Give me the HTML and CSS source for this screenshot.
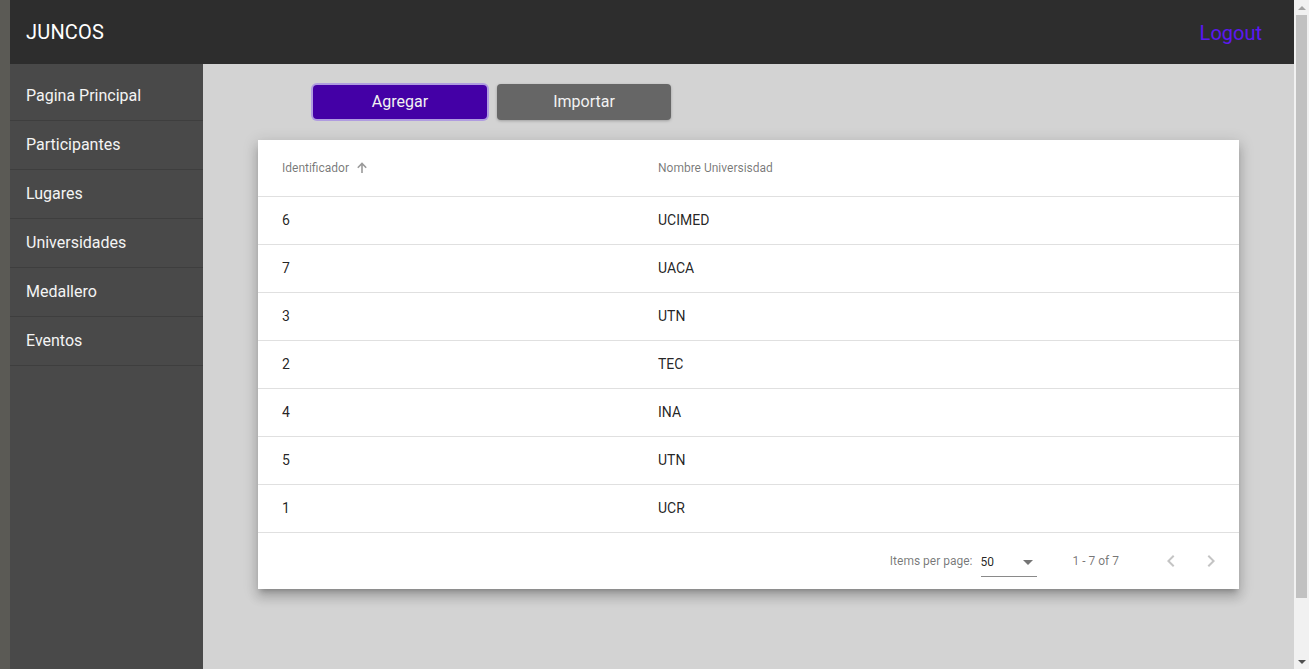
FILE: index.html
```html
<!DOCTYPE html>
<html lang="es">
<head>
<meta charset="utf-8">
<title>JUNCOS</title>
<link rel="stylesheet" href="styles.css">
</head>
<body>
<div class="window">
<div class="app">
  <header class="topbar">
    <span class="brand">JUNCOS</span>
    <a class="logout" href="#">Logout</a>
  </header>
  <div class="layout">
    <nav class="sidebar">
      <a class="nav-item" href="#">Pagina Principal</a>
      <a class="nav-item" href="#">Participantes</a>
      <a class="nav-item" href="#">Lugares</a>
      <a class="nav-item" href="#">Universidades</a>
      <a class="nav-item" href="#">Medallero</a>
      <a class="nav-item" href="#">Eventos</a>
    </nav>
    <main class="content">
      <div class="actions">
        <button class="btn btn-primary">Agregar</button>
        <button class="btn btn-secondary">Importar</button>
      </div>
      <section class="card">
        <div class="row head">
          <div class="cell">Identificador
            <svg class="sort" viewBox="0 0 12 12" width="12" height="12"><path d="M6 1.5 L6 11 M1.8 5.7 L6 1.5 L10.2 5.7" fill="none" stroke="currentColor" stroke-width="1.6"/></svg>
          </div>
          <div class="cell">Nombre Universisdad</div>
        </div>
        <div class="row"><div class="cell">6</div><div class="cell">UCIMED</div></div>
        <div class="row"><div class="cell">7</div><div class="cell">UACA</div></div>
        <div class="row"><div class="cell">3</div><div class="cell">UTN</div></div>
        <div class="row"><div class="cell">2</div><div class="cell">TEC</div></div>
        <div class="row"><div class="cell">4</div><div class="cell">INA</div></div>
        <div class="row"><div class="cell">5</div><div class="cell">UTN</div></div>
        <div class="row"><div class="cell">1</div><div class="cell">UCR</div></div>
        <div class="paginator">
          <span class="pg-label">Items per page:</span>
          <div class="pg-select">
            <span>50</span>
            <span class="caret"></span>
          </div>
          <span class="pg-range">1 - 7 of 7</span>
          <div class="pg-buttons">
            <button class="pg-btn" aria-label="Previous page">
              <svg viewBox="0 0 24 24" width="24" height="24"><path d="M15.41 7.41 14 6l-6 6 6 6 1.41-1.41L10.83 12z" fill="currentColor"/></svg>
            </button>
            <button class="pg-btn" aria-label="Next page">
              <svg viewBox="0 0 24 24" width="24" height="24"><path d="M10 6 8.59 7.41 13.17 12l-4.58 4.59L10 18l6-6z" fill="currentColor"/></svg>
            </button>
          </div>
        </div>
      </section>
    </main>
  </div>
</div>
<div class="scrollbar" aria-hidden="true">
  <span class="sb-arrow up"></span>
  <div class="sb-track"><div class="sb-thumb"></div></div>
  <span class="sb-arrow down"></span>
</div>
</div>
</body>
</html>
```

FILE: styles.css
```css
html, body {
  margin: 0;
  padding: 0;
  overflow: hidden;
}
body {
  background: #5b5a55;
  font-family: Roboto, "Noto Sans", "Liberation Sans", sans-serif;
}
.window {
  display: flex;
  height: 669px;
}
.app {
  flex: 1;
  margin-left: 10px;
  display: flex;
  flex-direction: column;
  background: #d3d3d3;
  overflow: hidden;
}
.topbar {
  height: 64px;
  flex: none;
  background: #2d2d2d;
  display: flex;
  align-items: center;
  justify-content: space-between;
  padding: 0 32px 0 16px;
}
.brand {
  color: #ffffff;
  font-size: 20px;
  letter-spacing: 0.2px;
}
.logout {
  color: #5c18f2;
  font-size: 20px;
  text-decoration: none;
  margin-top: 2px;
}
.layout {
  flex: 1;
  display: flex;
}
.sidebar {
  width: 193px;
  background: #494949;
  padding-top: 8px;
  display: flex;
  flex-direction: column;
}
.nav-item {
  box-sizing: border-box;
  height: 49px;
  padding-bottom: 2px;
  display: flex;
  align-items: center;
  padding-left: 16px;
  color: #f4f4f4;
  font-size: 16px;
  text-decoration: none;
  border-bottom: 1px solid #3e3e3e;
}
.content {
  flex: 1;
  padding-top: 20px;
}
.actions {
  display: flex;
  gap: 10px;
  padding-left: 110px;
  align-items: center;
  height: 36px;
}
.btn {
  font-family: inherit;
  font-size: 16px;
  color: #f2f2f2;
  border: none;
  border-radius: 4px;
  height: 36px;
  width: 174px;
  cursor: pointer;
  padding: 0 0 1px;
}
.btn-primary {
  background: #4400a6;
  height: 34px;
  box-shadow: 0 0 0 2px #b09ce0;
}
.btn-secondary {
  background: #666666;
  box-shadow: 0 1px 3px rgba(0,0,0,0.25);
}
.card {
  width: 981px;
  margin: 20px auto 0;
  background: #ffffff;
  box-shadow: 0 5px 5px -3px rgba(0,0,0,.2), 0 8px 10px 1px rgba(0,0,0,.14), 0 3px 14px 2px rgba(0,0,0,.12);
}
.row {
  display: grid;
  grid-template-columns: 376px 1fr;
  box-sizing: border-box;
  height: 48px;
  padding-bottom: 1px;
  align-items: center;
  border-bottom: 1px solid #e0e0e0;
  font-size: 14px;
  color: rgba(0,0,0,.87);
}
.row.head {
  height: 57px;
  font-size: 12px;
  color: rgba(0,0,0,.54);
}
.cell {
  padding-left: 24px;
  display: flex;
  align-items: center;
}
.sort {
  margin-left: 7px;
  color: #9a9a9a;
}
.paginator {
  height: 56px;
  display: flex;
  align-items: center;
  justify-content: flex-end;
  padding-right: 8px;
  font-size: 12px;
  color: rgba(0,0,0,.54);
}
.pg-label {
  margin-right: 8px;
}
.pg-select {
  width: 56px;
  height: 28px;
  display: flex;
  align-items: center;
  justify-content: space-between;
  border-bottom: 1px solid #8a8a8a;
  color: rgba(0,0,0,.87);
  box-sizing: border-box;
  margin-top: 3px;
}
.caret {
  width: 0;
  height: 0;
  border-left: 5px solid transparent;
  border-right: 5px solid transparent;
  border-top: 5px solid #757575;
  margin-right: 4px;
}
.pg-range {
  margin-left: 36px;
  margin-right: 32px;
}
.pg-buttons {
  display: flex;
}
.pg-btn {
  width: 40px;
  height: 40px;
  border: none;
  background: transparent;
  color: #c4c4c4;
  padding: 0;
  display: flex;
  align-items: center;
  justify-content: center;
}
.scrollbar {
  width: 15px;
  flex: none;
  background: #f1f1f1;
  display: flex;
  flex-direction: column;
  align-items: center;
}
.sb-arrow {
  height: 15px;
  width: 15px;
  display: flex;
  align-items: center;
  justify-content: center;
  flex: none;
}
.sb-arrow::before {
  content: "";
  width: 0;
  height: 0;
  border-left: 4px solid transparent;
  border-right: 4px solid transparent;
}
.sb-arrow.up::before {
  border-bottom: 4px solid #a3a3a3;
}
.sb-arrow.down::before {
  border-top: 4px solid #505050;
}
.sb-track {
  flex: 1;
  width: 100%;
  display: flex;
  flex-direction: column;
  align-items: center;
}
.sb-thumb {
  width: 11px;
  height: 583px;
  background: #c1c1c1;
}
```
